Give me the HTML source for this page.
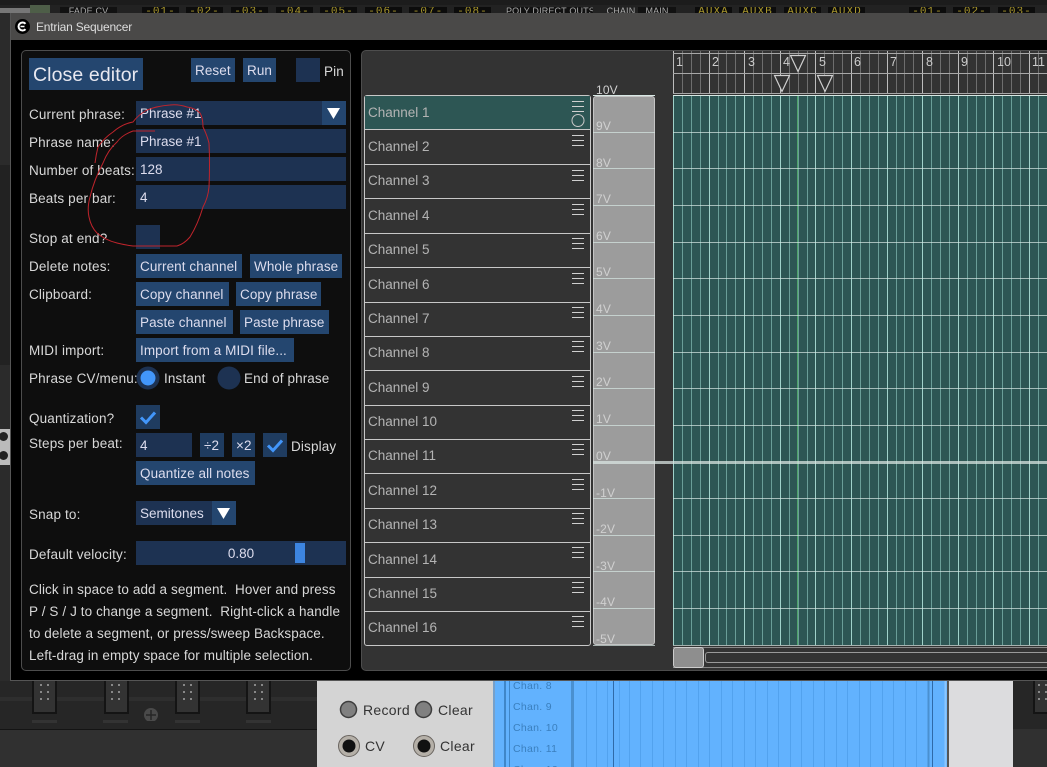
<!DOCTYPE html>
<html><head><meta charset="utf-8"><style>
html,body{margin:0;padding:0;background:#2a2a2a}
#r{position:relative;width:1047px;height:767px;overflow:hidden;background:#2a2a2a;font-family:"Liberation Sans",sans-serif;font-size:13.5px;letter-spacing:.15px;color:#d8d8d8}
#r div{position:absolute;white-space:nowrap;box-sizing:border-box}
.f{background:#1d3252;height:24px;line-height:26px;padding-left:4px;color:#dde;letter-spacing:0}
.b{background:#24466f;height:24px;line-height:26px;text-align:left;padding-left:4px;color:#dde;letter-spacing:.08px}
.l{left:29px;height:24px;line-height:26px;color:#d8d8d8}
.p{letter-spacing:.1px}
.y{top:7px;height:6px;background:#0c0c0c;color:#a8962c;font:11px "Liberation Mono",monospace;line-height:10px;text-align:center;overflow:hidden;letter-spacing:1px}
.w{top:7px;height:6px;background:#111;color:#aaa;font-size:9px;line-height:9px;text-align:center;overflow:hidden}
.ch{left:368px;color:#b4b4b4;height:20px;line-height:22px;letter-spacing:0}
.v{left:596px;color:#d0d0d0;font-size:12px;height:14px;line-height:14px}
.hl{left:593px;width:454px;height:1px;background:rgba(215,232,228,.7)}
.n{top:54px;color:#ccc;font-size:12.5px;height:16px;line-height:16px;letter-spacing:0}
.cbl{font-size:10.5px;color:#3a7fbe;left:513px;letter-spacing:.3px}
.t{color:#333;font-size:14px;letter-spacing:.3px}
</style></head><body><div id="r">

<!-- background top -->
<div style="left:0;top:0;width:1047px;height:13px;background:#222"></div>
<div style="left:0;top:0;width:1047px;height:5px;background:#1c1c1c"></div>
<div style="left:0;top:8px;width:30px;height:5px;background:#777"></div>
<div style="left:30px;top:5px;width:20px;height:8px;background:#4e5e48"></div>
<div class="w" style="left:60px;width:57px">FADE CV</div>
<div class="y" style="left:142px;width:37px">-01-</div>
<div class="y" style="left:186px;width:37px">-02-</div>
<div class="y" style="left:231px;width:37px">-03-</div>
<div class="y" style="left:276px;width:37px">-04-</div>
<div class="y" style="left:320px;width:37px">-05-</div>
<div class="y" style="left:365px;width:37px">-06-</div>
<div class="y" style="left:409px;width:38px">-07-</div>
<div class="y" style="left:454px;width:37px">-08-</div>
<div class="w" style="left:506px;width:87px">POLY DIRECT OUTS</div>
<div class="w" style="left:604px;width:34px;background:#222">CHAIN</div>
<div class="w" style="left:638px;width:38px">MAIN</div>
<div class="y" style="left:695px;width:37px">AUXA</div>
<div class="y" style="left:739px;width:37px">AUXB</div>
<div class="y" style="left:784px;width:37px">AUXC</div>
<div class="y" style="left:828px;width:37px">AUXD</div>
<div class="y" style="left:909px;width:37px">-01-</div>
<div class="y" style="left:953px;width:37px">-02-</div>
<div class="y" style="left:998px;width:37px">-03-</div>

<!-- background left -->
<div style="left:0;top:13px;width:10px;height:668px;background:#2b2b2b"></div>
<div style="left:0;top:165px;width:10px;height:200px;background:#222"></div>
<div style="left:0;top:429px;width:10px;height:36px;background:#bbb"></div>
<div style="left:-1px;top:432px;width:9px;height:9px;border-radius:50%;background:#222"></div>
<div style="left:-1px;top:451px;width:9px;height:9px;border-radius:50%;background:#222"></div>

<!-- background bottom -->
<div style="left:0;top:681px;width:317px;height:48px;background:#262626"></div>
<div style="left:0;top:697px;width:317px;height:4px;background:#2e2e2e"></div>
<div style="left:0;top:729px;width:317px;height:1px;background:#141414"></div>
<div style="left:0;top:730px;width:317px;height:37px;background:#303030"></div>
<div style="left:32px;top:681px;width:25px;height:33px;background:#333;border:2px solid #141414;border-top:0"></div>
<div style="left:104px;top:681px;width:25px;height:33px;background:#333;border:2px solid #141414;border-top:0"></div>
<div style="left:175px;top:681px;width:25px;height:33px;background:#333;border:2px solid #141414;border-top:0"></div>
<div style="left:246px;top:681px;width:25px;height:33px;background:#333;border:2px solid #141414;border-top:0"></div>
<div style="left:32px;top:720px;width:25px;height:3px;background:#333"></div>
<div style="left:103px;top:720px;width:25px;height:3px;background:#333"></div>
<div style="left:175px;top:720px;width:25px;height:3px;background:#333"></div>
<div style="left:246px;top:720px;width:25px;height:3px;background:#333"></div>
<svg style="position:absolute;left:0;top:681px" width="317" height="40" fill="#888">
<rect x="40" y="3" width="2" height="2"/><rect x="47" y="3" width="2" height="2"/><rect x="40" y="10" width="2" height="2"/><rect x="47" y="10" width="2" height="2"/><rect x="40" y="17" width="2" height="2"/><rect x="47" y="17" width="2" height="2"/>
<rect x="111" y="3" width="2" height="2"/><rect x="118" y="3" width="2" height="2"/><rect x="111" y="10" width="2" height="2"/><rect x="118" y="10" width="2" height="2"/><rect x="111" y="17" width="2" height="2"/><rect x="118" y="17" width="2" height="2"/>
<rect x="183" y="3" width="2" height="2"/><rect x="190" y="3" width="2" height="2"/><rect x="183" y="10" width="2" height="2"/><rect x="190" y="10" width="2" height="2"/><rect x="183" y="17" width="2" height="2"/><rect x="190" y="17" width="2" height="2"/>
<rect x="254" y="3" width="2" height="2"/><rect x="261" y="3" width="2" height="2"/><rect x="254" y="10" width="2" height="2"/><rect x="261" y="10" width="2" height="2"/><rect x="254" y="17" width="2" height="2"/><rect x="261" y="17" width="2" height="2"/>
<circle cx="151" cy="34" r="7" fill="#4a4a4a"/><path d="M146 34h10M151 29v10" stroke="#262626" stroke-width="1.500"/>
</svg>

<!-- silver panels -->
<div style="left:317px;top:681px;width:176px;height:86px;background:#d4d4d4"></div>
<div style="left:947px;top:681px;width:66px;height:86px;background:#dcdcde;border-left:2px solid #555"></div>
<div style="left:1013px;top:681px;width:34px;height:48px;background:#262626"></div>
<div style="left:1013px;top:729px;width:34px;height:38px;background:#303030"></div>
<div style="left:1033px;top:681px;width:14px;height:33px;background:#333;border:2px solid #141414;border-top:0;border-right:0"></div>
<svg style="position:absolute;left:1035px;top:681px" width="12" height="22" fill="#888"><rect x="3" y="3" width="2" height="2"/><rect x="10" y="3" width="2" height="2"/><rect x="3" y="10" width="2" height="2"/><rect x="10" y="10" width="2" height="2"/><rect x="3" y="17" width="2" height="2"/><rect x="10" y="17" width="2" height="2"/></svg>
<svg style="position:absolute;left:317px;top:681px" width="176" height="86">
<circle cx="31.500" cy="28.500" r="8" fill="#808080" stroke="#3d3d3d" stroke-width="1.500"/>
<circle cx="106.500" cy="28.500" r="8" fill="#808080" stroke="#3d3d3d" stroke-width="1.500"/>
<circle cx="32" cy="65" r="10.500" fill="#b5b0a8" stroke="#6a6560"/><circle cx="32" cy="65" r="6.500" fill="#111"/>
<circle cx="107" cy="65" r="10.500" fill="#b5b0a8" stroke="#6a6560"/><circle cx="107" cy="65" r="6.500" fill="#111"/>
</svg>
<div class="t" style="left:363px;top:702px">Record</div>
<div class="t" style="left:438px;top:702px">Clear</div>
<div class="t" style="left:365px;top:738px">CV</div>
<div class="t" style="left:440px;top:738px">Clear</div>

<!-- blue -->
<div style="left:493px;top:681px;width:454px;height:86px;background:#62b2fe"></div>
<svg style="position:absolute;left:493px;top:681px" width="454" height="86" fill="none">
<path d="M1 0v86" stroke="#8a8f96" stroke-width="1"/>
<path d="M12 0v86" stroke="#3f86c8" stroke-width="2"/>
<path d="M16.500 0v86" stroke="#3f86c8"/>
<path d="M79.500 0v86" stroke="#4a90d0" stroke-width="3"/>
<path d="M93.500 0v86M103.500 0v86M114.500 0v86M126.500 0v86M136.500 0v86M147.500 0v86M159.500 0v86M170.500 0v86M182.500 0v86M193.500 0v86M205.500 0v86M216.500 0v86M228.500 0v86M239.500 0v86M251.500 0v86M262.500 0v86M274.500 0v86M285.500 0v86M297.500 0v86M308.500 0v86M320.500 0v86M331.500 0v86M343.500 0v86M354.500 0v86M366.500 0v86M377.500 0v86M389.500 0v86M400.500 0v86M412.500 0v86M423.500 0v86" stroke="#52a2ee"/>
<path d="M120.500 0v86" stroke="#2f6aa8"/>
<path d="M435.500 0v86" stroke="#4a90d0" stroke-width="2"/>
<path d="M439.500 0v86" stroke="#2f6aa8"/>
<path d="M452.500 0v86" stroke="#8cc6fe" stroke-width="2"/>
</svg>
<div class="cbl" style="top:680px">Chan. 8</div>
<div class="cbl" style="top:701px">Chan. 9</div>
<div class="cbl" style="top:722px">Chan. 10</div>
<div class="cbl" style="top:743px">Chan. 11</div>
<div class="cbl" style="top:764px">Chan. 12</div>

<!-- window -->
<div style="left:10px;top:13px;width:1037px;height:668px;background:#000;border-left:1px solid #555;border-bottom:1px solid #555"></div>
<div style="left:11px;top:13px;width:1036px;height:27px;background:#4a4948"></div>
<div style="left:15px;top:19px;width:15px;height:15px;border-radius:50%;background:#000"></div>
<svg style="position:absolute;left:15px;top:19px" width="15" height="15"><path d="M10.500 4.800A4 4 0 1 0 10.500 10.200" fill="none" stroke="#fff" stroke-width="2"/><path d="M5.500 7.500h4" stroke="#fff" stroke-width="1.500"/></svg>
<div style="left:36px;top:19px;font-size:12px;letter-spacing:-.2px;height:16px;line-height:16px;color:#ddd">Entrian Sequencer</div>

<!-- left panel -->
<div style="left:21px;top:50px;width:330px;height:621px;background:#0e0e0e;border:1px solid #4d4d4d;border-radius:5px"></div>
<div class="b" style="left:29px;top:58px;width:114px;height:32px;line-height:34px;font-size:19.500px;letter-spacing:.1px;color:#e8e8f0">Close editor</div>
<div class="b" style="left:191px;top:58px;width:44px">Reset</div>
<div class="b" style="left:243px;top:58px;width:33px">Run</div>
<div class="f" style="left:296px;top:58px;width:24px"></div>
<div class="l" style="left:324px;top:59px">Pin</div>

<div class="l" style="top:102px">Current phrase:</div>
<div class="f" style="left:136px;top:101px;width:210px">Phrase #1</div>
<div class="b" style="left:322px;top:101px;width:24px"></div>
<svg style="position:absolute;left:322px;top:101px" width="24" height="24"><path d="M5 7h13l-6.500 11z" fill="#fff"/></svg>
<div class="l" style="top:130px">Phrase name:</div>
<div class="f" style="left:136px;top:129px;width:210px">Phrase #1</div>
<div class="l" style="top:158px">Number of beats:</div>
<div class="f" style="left:136px;top:157px;width:210px">128</div>
<div class="l" style="top:186px">Beats per bar:</div>
<div class="f" style="left:136px;top:185px;width:210px">4</div>
<div class="l" style="top:226px">Stop at end?</div>
<div class="f" style="left:136px;top:225px;width:24px"></div>

<div class="l" style="top:254px">Delete notes:</div>
<div class="b" style="left:136px;top:254px;width:106px">Current channel</div>
<div class="b" style="left:250px;top:254px;width:92px">Whole phrase</div>
<div class="l" style="top:282px">Clipboard:</div>
<div class="b" style="left:136px;top:282px;width:93px">Copy channel</div>
<div class="b" style="left:236px;top:282px;width:85px">Copy phrase</div>
<div class="b" style="left:136px;top:310px;width:97px">Paste channel</div>
<div class="b" style="left:240px;top:310px;width:89px">Paste phrase</div>
<div class="l" style="top:338px">MIDI import:</div>
<div class="b" style="left:136px;top:338px;width:158px">Import from a MIDI file...</div>
<div class="l" style="top:366px">Phrase CV/menu:</div>
<svg style="position:absolute;left:136px;top:366px" width="105" height="24"><circle cx="12" cy="12" r="11.500" fill="#1d3252"/><circle cx="12" cy="12" r="7.500" fill="#4296fa"/><circle cx="93" cy="12" r="11.500" fill="#1d3252"/></svg>
<div class="l" style="left:164px;top:366px">Instant</div>
<div class="l p" style="left:244px;top:366px">End of phrase</div>

<div class="l" style="top:406px">Quantization?</div>
<div class="f" style="left:136px;top:405px;width:24px;background:#1f3c60"></div>
<svg style="position:absolute;left:136px;top:405px" width="24" height="24"><path d="M5 12.500l5 5 9-10" fill="none" stroke="#4296fa" stroke-width="3"/></svg>
<div class="l" style="top:431px">Steps per beat:</div>
<div class="f" style="left:136px;top:433px;width:56px">4</div>
<div class="b" style="left:200px;top:433px;width:24px;background:#1f3c60">÷2</div>
<div class="b" style="left:232px;top:433px;width:23px;background:#1f3c60">×2</div>
<div class="f" style="left:263px;top:433px;width:24px;background:#1f3c60"></div>
<svg style="position:absolute;left:263px;top:433px" width="24" height="24"><path d="M5 12.500l5 5 9-10" fill="none" stroke="#4296fa" stroke-width="3"/></svg>
<div class="l" style="left:291px;top:434px">Display</div>
<div class="b" style="left:136px;top:461px;width:119px">Quantize all notes</div>
<div class="l" style="top:502px">Snap to:</div>
<div class="f" style="left:136px;top:501px;width:100px">Semitones</div>
<div class="b" style="left:212px;top:501px;width:24px"></div>
<svg style="position:absolute;left:212px;top:501px" width="24" height="24"><path d="M5 7h13l-6.500 11z" fill="#fff"/></svg>
<div class="l" style="top:542px">Default velocity:</div>
<div class="f" style="left:136px;top:541px;width:210px;padding:0;text-align:center">0.80</div>
<div style="left:295px;top:543px;width:10px;height:20px;background:#3d85e0"></div>
<div class="l p" style="top:577px">Click in space to add a segment.&nbsp; Hover and press</div>
<div class="l p" style="top:599px">P / S / J to change a segment.&nbsp; Right-click a handle</div>
<div class="l p" style="top:621px">to delete a segment, or press/sweep Backspace.</div>
<div class="l p" style="top:643px">Left-drag in empty space for multiple selection.</div>

<!-- right panel -->
<div style="left:361px;top:50px;width:690px;height:621px;background:#333;border:1px solid #4d4d4d;border-radius:5px"></div>

<!-- ruler -->
<svg style="position:absolute;left:673px;top:51px" width="374" height="44" fill="none">
<path d="M9.500 0v43M18.500 0v43M27.500 0v43M45.500 0v43M53.500 0v43M62.500 0v43M80.500 0v43M89.500 0v43M98.500 0v43M116.500 0v43M125.500 0v43M134.500 0v43M151.500 0v43M160.500 0v43M169.500 0v43M187.500 0v43M196.500 0v43M205.500 0v43M223.500 0v43M231.500 0v43M240.500 0v43M258.500 0v43M267.500 0v43M276.500 0v43M294.500 0v43M303.500 0v43M312.500 0v43M329.500 0v43M338.500 0v43M347.500 0v43M365.500 0v43" stroke="#6e6e6e"/>
<path d="M.5 0v43M36.500 0v43M71.500 0v43M107.500 0v43M142.500 0v43M178.500 0v43M214.500 0v43M249.500 0v43M285.500 0v43M320.500 0v43M356.500 0v43" stroke="#bcbcbc"/>
<path d="M0 2.500h374M0 22.500h374M0 42.500h374" stroke="#a8a8a8"/>
</svg>
<div class="n" style="left:676px">1</div><div class="n" style="left:712px">2</div><div class="n" style="left:748px">3</div><div class="n" style="left:783px">4</div><div class="n" style="left:819px">5</div><div class="n" style="left:854px">6</div><div class="n" style="left:890px">7</div><div class="n" style="left:926px">8</div><div class="n" style="left:961px">9</div><div class="n" style="left:997px">10</div><div class="n" style="left:1032px">11</div>
<svg style="position:absolute;left:770px;top:52px" width="70" height="44" fill="#333" stroke="#d0d0d0" stroke-width="1.200"><path d="M20.500 3.500h15l-7.500 16z"/><path d="M4.500 23.500h15l-7.500 16z"/><path d="M47.500 23.500h15l-7.500 16z"/></svg>

<!-- grid -->
<div style="left:673px;top:96px;width:374px;height:549px;background:#2d5654"></div>
<svg style="position:absolute;left:673px;top:96px" width="374" height="549" fill="none">
<path d="M9.500 0v549M18.500 0v549M27.500 0v549M45.500 0v549M53.500 0v549M62.500 0v549M80.500 0v549M89.500 0v549M98.500 0v549M116.500 0v549M125.500 0v549M134.500 0v549M151.500 0v549M160.500 0v549M169.500 0v549M187.500 0v549M196.500 0v549M205.500 0v549M223.500 0v549M231.500 0v549M240.500 0v549M258.500 0v549M267.500 0v549M276.500 0v549M294.500 0v549M303.500 0v549M312.500 0v549M329.500 0v549M338.500 0v549M347.500 0v549M365.500 0v549" stroke="#6a9e98"/>
<path d="M.5 0v549M36.500 0v549M71.500 0v549M107.500 0v549M142.500 0v549M178.500 0v549M214.500 0v549M249.500 0v549M285.500 0v549M320.500 0v549M356.500 0v549" stroke="#a0d2ca"/>
<path d="M124.500 0v549" stroke="#4fa36a"/>
</svg>

<!-- voltage strip -->
<div style="left:593px;top:96px;width:62px;height:549px;background:#9c9c9c;border:1px solid #c4c4c4;border-radius:3px"></div>
<div class="hl" style="top:95px;background:#d8e8e4"></div>
<div class="hl" style="top:132px"></div><div class="hl" style="top:168px"></div><div class="hl" style="top:205px"></div><div class="hl" style="top:242px"></div><div class="hl" style="top:278px"></div><div class="hl" style="top:315px"></div><div class="hl" style="top:352px"></div><div class="hl" style="top:388px"></div><div class="hl" style="top:425px"></div>
<div class="hl" style="top:498px"></div><div class="hl" style="top:535px"></div><div class="hl" style="top:571px"></div><div class="hl" style="top:608px"></div>
<div class="hl" style="top:645px"></div>
<div style="left:655px;top:90px;width:18px;height:560px;background:#333"></div>
<div class="hl" style="top:461px;height:3px;background:rgba(220,232,228,.72)"></div>
<div class="v" style="top:83px">10V</div><div class="v" style="top:119px">9V</div><div class="v" style="top:156px">8V</div><div class="v" style="top:192px">7V</div><div class="v" style="top:229px">6V</div><div class="v" style="top:265px">5V</div><div class="v" style="top:302px">4V</div><div class="v" style="top:339px">3V</div><div class="v" style="top:375px">2V</div><div class="v" style="top:412px">1V</div><div class="v" style="top:449px">0V</div><div class="v" style="top:486px">-1V</div><div class="v" style="top:522px">-2V</div><div class="v" style="top:559px">-3V</div><div class="v" style="top:595px">-4V</div><div class="v" style="top:632px">-5V</div>

<!-- channels -->
<div style="left:364px;top:95px;width:227px;height:551px;border:1px solid #c8c8c8;border-radius:3px;background:#333"></div>
<div style="left:365px;top:96px;width:225px;height:33px;background:#2d5654"></div>
<svg style="position:absolute;left:364px;top:95px" width="227" height="551" stroke="#c8c8c8" fill="none">
<path d="M0 34.500h227M0 69.500h227M0 103.500h227M0 138.500h227M0 172.500h227M0 207.500h227M0 241.500h227M0 275.500h227M0 310.500h227M0 344.500h227M0 378.500h227M0 413.500h227M0 447.500h227M0 482.500h227M0 516.500h227"/>
<circle cx="214" cy="25.500" r="6"/>
<g stroke="#d0d0d0"><path d="M208 6.500h12M208 11.500h12M208 16.500h12"/><path d="M208 40.500h12M208 45.500h12M208 50.500h12"/><path d="M208 75.500h12M208 80.500h12M208 85.500h12"/><path d="M208 109.500h12M208 114.500h12M208 119.500h12"/><path d="M208 143.500h12M208 148.500h12M208 153.500h12"/><path d="M208 178.500h12M208 183.500h12M208 188.500h12"/><path d="M208 212.500h12M208 217.500h12M208 222.500h12"/><path d="M208 246.500h12M208 251.500h12M208 256.500h12"/><path d="M208 281.500h12M208 286.500h12M208 291.500h12"/><path d="M208 315.500h12M208 320.500h12M208 325.500h12"/><path d="M208 349.500h12M208 354.500h12M208 359.500h12"/><path d="M208 384.500h12M208 389.500h12M208 394.500h12"/><path d="M208 418.500h12M208 423.500h12M208 428.500h12"/><path d="M208 452.500h12M208 457.500h12M208 462.500h12"/><path d="M208 487.500h12M208 492.500h12M208 497.500h12"/><path d="M208 521.500h12M208 526.500h12M208 531.500h12"/></g>
</svg>
<div class="ch" style="top:102px">Channel 1</div><div class="ch" style="top:136px">Channel 2</div><div class="ch" style="top:170px">Channel 3</div><div class="ch" style="top:205px">Channel 4</div><div class="ch" style="top:239px">Channel 5</div><div class="ch" style="top:274px">Channel 6</div><div class="ch" style="top:308px">Channel 7</div><div class="ch" style="top:342px">Channel 8</div><div class="ch" style="top:377px">Channel 9</div><div class="ch" style="top:411px">Channel 10</div><div class="ch" style="top:445px">Channel 11</div><div class="ch" style="top:480px">Channel 12</div><div class="ch" style="top:514px">Channel 13</div><div class="ch" style="top:549px">Channel 14</div><div class="ch" style="top:583px">Channel 15</div><div class="ch" style="top:617px">Channel 16</div>

<!-- scrollbar -->
<div style="left:673px;top:647px;width:374px;height:1px;background:#888"></div>
<div style="left:673px;top:667px;width:374px;height:1px;background:#888"></div>
<div style="left:705px;top:652px;width:342px;height:11px;border:1px solid #999;border-right:0;border-radius:3px 0 0 3px"></div>
<div style="left:673px;top:647px;width:31px;height:21px;background:#8e8e8e;border:1px solid #ccc;border-radius:3px"></div>

<!-- red hand-drawn circle -->
<svg style="position:absolute;left:0;top:0" width="300" height="300"><path d="M155 131L133 131Q122 135 117 142Q108 150 103 163Q94 180 90 197Q87 208 89 217Q91 227 97 233Q105 240 117 243Q125 245 133 246L177 246Q184 244 190 237Q198 224 203 207Q208 198 209 187Q210 165 209 143Q207 135 203 127Q203 118 200 113Q195 108 187 107Q178 104 170 105Q157 106 147 110Q138 115 133 122Q122 124 113 132Q104 138 98 147Q96 155 95 163" fill="none" stroke="#c0242c" stroke-width="1"/></svg>
</div></body></html>
